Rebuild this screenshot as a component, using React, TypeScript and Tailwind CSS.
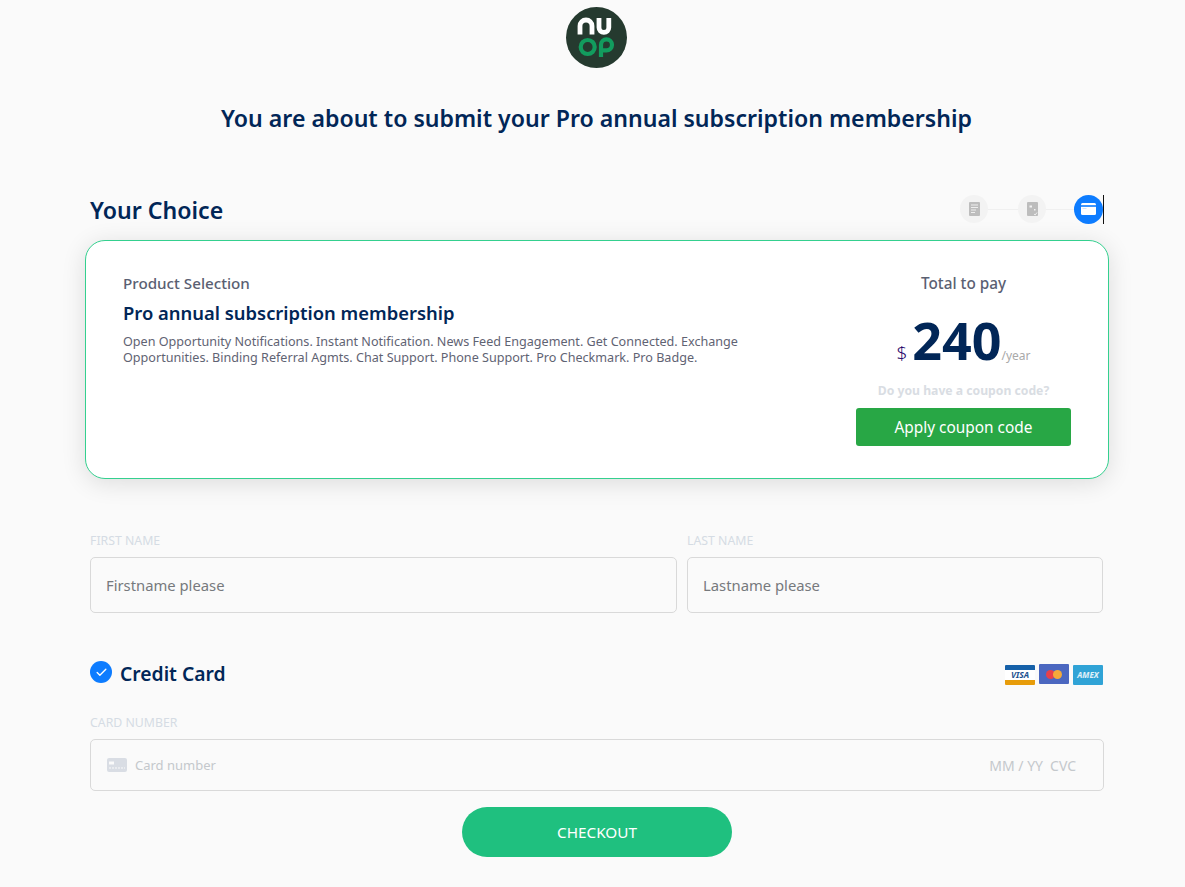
import React from 'react';
import { Check } from 'lucide-react';

const font = { fontFamily: '"Noto Sans", "Open Sans", sans-serif' };

const Logo = () => (
  <svg width="61" height="61" viewBox="0 0 61 61">
    <circle cx="30.5" cy="30.5" r="30.5" fill="#253a2f" />
    <path d="M14 27.500V19a6 6 0 0 1 12 0v8.500" fill="none" stroke="#fff" strokeWidth="4.800" />
    <path d="M33 11v9.500a4.900 4.900 0 0 0 9.800 0V11" fill="none" stroke="#fff" strokeWidth="4.800" />
    <circle cx="21.700" cy="40" r="7" fill="none" stroke="#129c5e" strokeWidth="4.200" />
    <path d="M35 50V37.800a5.500 5.500 0 1 1 5.500 5.500H35" fill="none" stroke="#129c5e" strokeWidth="4.200" />
  </svg>
);

const StepDoc = () => (
  <div className="w-7 h-7 rounded-full bg-[#f3f3f3] flex items-center justify-center">
    <svg width="11" height="14" viewBox="0 0 11 14">
      <rect width="11" height="14" rx="1" fill="#bdbdbd" />
      <path d="M2 3h7M2 5.500h7M2 8h5M2 10.500h4" stroke="#eee" strokeWidth="1" />
    </svg>
  </div>
);

const StepCoupon = () => (
  <div className="w-7 h-7 rounded-full bg-[#f3f3f3] flex items-center justify-center">
    <svg width="11" height="14" viewBox="0 0 11 14">
      <path d="M1 0h9a1 1 0 0 1 1 1v12a1 1 0 0 1-1 1H1a1 1 0 0 1-1-1V1a1 1 0 0 1 1-1z" fill="#bdbdbd" />
      <rect x="2.500" y="3.500" width="2.500" height="2" fill="#f3f3f3" />
      <rect x="7" y="7" width="1.500" height="1.500" fill="#f3f3f3" />
      <path d="M7 12l1.200 1L10 10.500" stroke="#f3f3f3" fill="none" strokeWidth="0.900" />
    </svg>
  </div>
);

const StepCard = () => (
  <div className="w-[29px] h-[29px] rounded-full bg-[#0d7cff] flex items-center justify-center">
    <svg width="15" height="12" viewBox="0 0 15 12">
      <rect width="15" height="12" rx="1.500" fill="#fff" />
      <rect y="2.200" width="15" height="1.600" fill="#0d7cff" />
      <rect x="1.500" y="5" width="4" height="1" fill="#cfe3ff" />
    </svg>
  </div>
);

const Field = ({ label, placeholder, className }: { label: string; placeholder: string; className: string }) => (
  <div className={className}>
    <div className="text-[12.300px] leading-[16px] text-[#d5dce4] mb-[8px] uppercase">{label}</div>
    <div className="h-[56px] border border-[#d9d9d9] rounded-[5px] flex items-center px-[15px] text-[14.800px] text-[#76797d]">
      {placeholder}
    </div>
  </div>
);

const VisaCard = () => (
  <div className="mt-[2px] w-[30px] h-[20px] rounded-[1px] overflow-hidden flex flex-col bg-white">
    <div className="h-[5px] bg-[#1560a8]" />
    <div className="flex-1 flex items-center justify-center text-[8.500px] leading-none font-bold italic text-[#1a4f8f]">VISA</div>
    <div className="h-[5px] bg-[#e79c0a]" />
  </div>
);

const MasterCard = () => (
  <div className="w-[30px] h-[20px] rounded-[1px] bg-[#4b67c0] flex items-center justify-center">
    <div className="w-[9px] h-[9px] rounded-full bg-[#e8404a]" />
    <div className="w-[9px] h-[9px] rounded-full bg-[#f4a93a] -ml-[2px]" />
  </div>
);

const AmexCard = () => (
  <div className="mt-[2px] w-[30px] h-[20px] rounded-[1px] bg-[#30a3d6] flex items-center justify-center text-[8px] leading-none italic font-bold text-white/85">
    AMEX
  </div>
);

export default function App() {
  return (
    <div className="min-h-[887px] bg-[#fafafa] pt-[7px]" style={font}>
      <div className="flex justify-center pl-[8px]">
        <Logo />
      </div>
      <h1 className="mt-[32px] pl-[8px] text-center text-[23.100px] leading-[36px] font-semibold text-[#012657]">
        You are about to submit your Pro annual subscription membership
      </h1>

      <div className="mt-[55px] ml-[90px] w-[1014px]">
        <div className="flex items-center justify-between h-[38px]">
          <h2 className="text-[23.100px] leading-[36px] font-semibold text-[#012657]">Your Choice</h2>
          <div className="flex items-center border-r border-[#111] h-[29px] mb-[2px]">
            <StepDoc />
            <div className="w-[30px] h-px bg-[#f0f0f0]" />
            <StepCoupon />
            <div className="w-[28px] h-px bg-[#f0f0f0]" />
            <StepCard />
          </div>
        </div>

        <div className="mt-[11px] -mx-[5px] h-[239px] bg-white border border-[#34d08f] rounded-[20px] shadow-[0_4px_24px_rgba(0,0,0,0.12)] flex justify-between pl-[37px] pr-[37px] pt-[30px]">
          <div className="w-[640px]">
            <div className="text-[15.200px] leading-[24px] font-medium text-[#5a6072]">Product Selection</div>
            <div className="mt-[6px] text-[18.400px] leading-[24px] font-semibold text-[#012657]">Pro annual subscription membership</div>
            <p className="mt-[9px] text-[12.600px] leading-[16px] text-[#5f6373]">
              Open Opportunity Notifications. Instant Notification. News Feed Engagement. Get Connected. Exchange Opportunities. Binding Referral Agmts. Chat Support. Phone Support. Pro Checkmark. Pro Badge.
            </p>
          </div>
          <div className="w-[215px] flex flex-col items-center">
            <div className="text-[15.300px] leading-[24px] font-medium text-[#5a6072]">Total to pay</div>
            <div className="mt-[15px] flex items-baseline h-[60px]">
              <span className="text-[19px] font-light text-[#2a0a6a] mr-[5px]">$</span>
              <span className="text-[52px] leading-[60px] font-bold text-[#012657]">240</span>
              <span className="text-[12px] text-[#a9a9a9]">/year</span>
            </div>
            <div className="mt-[12px] text-[12.200px] leading-[18px] font-bold text-[#d9dde3]">Do you have a coupon code?</div>
            <button className="mt-[8px] w-[215px] h-[38px] pt-[2px] rounded-[3px] bg-[#28a745] text-white text-[15.400px]">Apply coupon code</button>
          </div>
        </div>

        <div className="mt-[54px] flex gap-[10px] w-[1013px]">
          <Field className="w-[587px]" label="First name" placeholder="Firstname please" />
          <Field className="flex-1" label="Last name" placeholder="Lastname please" />
        </div>

        <div className="mt-[47px] flex items-center justify-between h-[28px] w-[1013px]">
          <div className="flex items-center gap-[8px]">
            <div className="w-[22px] h-[22px] mb-[4px] rounded-full bg-[#0d7cff] flex items-center justify-center">
              <Check size={13} color="#fff" strokeWidth={2.500} />
            </div>
            <span className="text-[19.300px] leading-[28px] font-semibold text-[#012657]">Credit Card</span>
          </div>
          <div className="flex items-center gap-[4px]">
            <VisaCard />
            <MasterCard />
            <AmexCard />
          </div>
        </div>

        <div className="mt-[27px] text-[12.300px] leading-[16px] text-[#d5dce4] uppercase">Card number</div>
        <div className="mt-[8px] h-[52px] border border-[#d9d9d9] rounded-[5px] flex items-center justify-between pl-[16px] pr-[27px] text-[13px] text-[#c4c8cc]">
          <div className="flex items-center gap-[8px]">
            <svg width="20" height="14" viewBox="0 0 20 14">
              <rect width="20" height="14" rx="2" fill="#d9dde4" />
              <rect x="2" y="3.500" width="5" height="3" fill="#fafafa" />
              <path d="M2 10h16" stroke="#fafafa" strokeWidth="1" strokeDasharray="2 1" />
            </svg>
            <span className="pt-[2px]">Card number</span>
          </div>
          <div className="flex gap-[7px] text-[14px]">
            <span>MM / YY</span>
            <span>CVC</span>
          </div>
        </div>

        <div className="mt-[16px] flex justify-center">
          <button className="w-[270px] h-[50px] rounded-full bg-[#1fc07f] text-white text-[15.300px]">CHECKOUT</button>
        </div>
      </div>
    </div>
  );
}
